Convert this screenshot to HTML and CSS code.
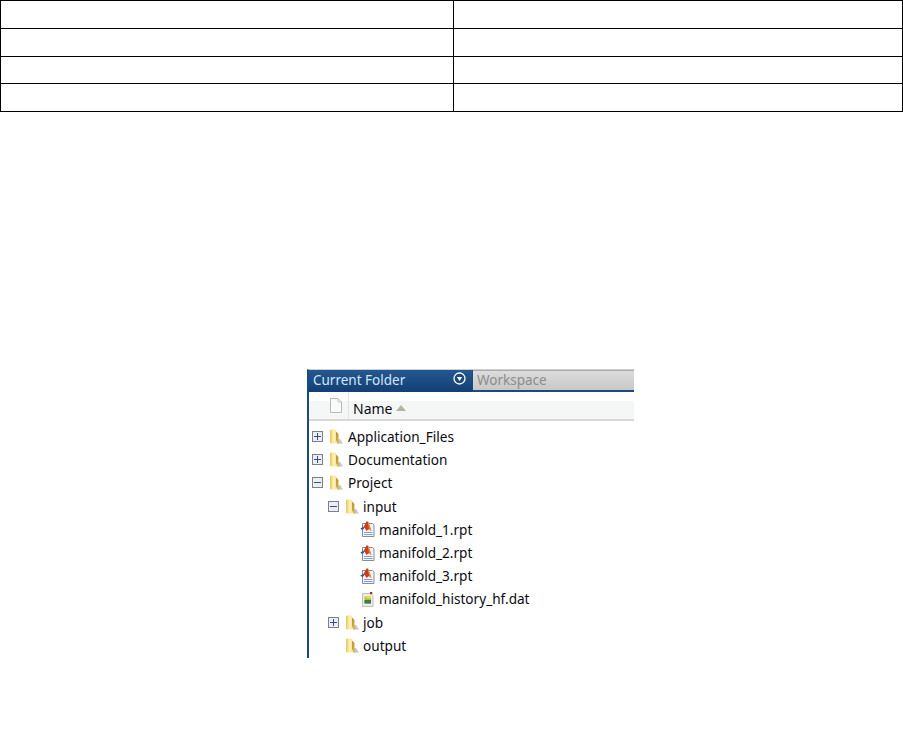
FILE: index.html
```html
<!DOCTYPE html>
<html lang="en">
<head>
<meta charset="utf-8">
<title>Current Folder</title>
<link rel="stylesheet" href="styles.css">
</head>
<body>
<svg class="defs" width="0" height="0" aria-hidden="true">
  <defs>
    <linearGradient id="fg" x1="0" y1="0" x2="1" y2="0">
      <stop offset="0" stop-color="#e8c455"/>
      <stop offset=".45" stop-color="#fdf2b8"/>
      <stop offset="1" stop-color="#f4dc88"/>
    </linearGradient>
    <linearGradient id="fs" x1="0" y1="0" x2="1" y2="1">
      <stop offset="0" stop-color="#b98c20"/>
      <stop offset="1" stop-color="#e0c470"/>
    </linearGradient>
    <symbol id="folder" viewBox="0 0 14 15">
      <path d="M7.500 10h3.500l3 4.500H8z" fill="#c6c6c2"/>
      <path d="M1 1.500 2 .5h4.500l.5 1v10l2 3H2L1 13.500z" fill="url(#fg)"/>
      <path d="M7 2.500l2.500 2.500v6.500l1.500 3H9l-2-3z" fill="url(#fs)"/>
    </symbol>
    <symbol id="plus" viewBox="0 0 11 11">
      <rect x=".5" y=".5" width="10" height="10" fill="#eeeef2" stroke="#7d8088"/>
      <path d="M2 5.500h7M5.500 2v7" stroke="#2f4f86"/>
    </symbol>
    <symbol id="minus" viewBox="0 0 11 11">
      <rect x=".5" y=".5" width="10" height="10" fill="#eeeef2" stroke="#7d8088"/>
      <path d="M2 5.500h7" stroke="#2f4f86"/>
    </symbol>
    <symbol id="rpt" viewBox="0 0 15 16">
      <path d="M2.500 2.500h10l1.500 1.500v11.500H2.500z" fill="#f2f3fa" stroke="#7f8fa8"/>
      <path d="M4 11.500h8.500M4 13.500h8.500" stroke="#8aa0c4"/>
      <path d="M.5 7.500 3.500 6 6.500 .5 8 .5 11.500 10 9 8 6.500 10 4.500 6.500 2.500 9z" fill="#d03c18"/>
      <path d="M.5 7.500 3.500 6 4.500 6.500 2.500 9z" fill="#2458a8"/>
      <path d="M8 .5 11.500 10 9.500 8.500 8 3z" fill="#f09030"/>
    </symbol>
    <symbol id="dat" viewBox="0 0 12 16">
      <path d="M.5 2.500h8.500l2 2v11H.5z" fill="#ececea" stroke="#c0c0bc"/>
      <rect x="2.500" y="5.500" width="6.500" height="7" fill="#a8c83c"/>
      <rect x="2.500" y="9" width="6.500" height="3.500" fill="#3c7c48"/>
      <rect x="4" y="5" width="5" height="2.500" fill="#ecd850"/>
      <rect x="8" y="1" width="2.200" height="2.200" fill="#a82038"/>
    </symbol>
  </defs>
</svg>

<table class="grid">
  <tr><td></td><td></td></tr>
  <tr><td></td><td></td></tr>
  <tr class="short"><td></td><td></td></tr>
  <tr><td></td><td></td></tr>
</table>

<section class="panel">
  <div class="tabs">
    <div class="tab-active">
      <span>Current Folder</span>
      <svg class="tab-menu" viewBox="0 0 13 13" width="13" height="13"><circle cx="6.500" cy="6.500" r="5.500" fill="#1c4a80" stroke="#fff" stroke-width="1.300"/><path d="M3.800 5h5.400L6.500 9z" fill="#fff"/></svg>
    </div>
    <div class="tab-idle">Workspace</div>
  </div>
  <div class="columns">
    <div class="col-icon">
      <svg viewBox="0 0 12 15" width="12" height="15"><path d="M.5.500h7.500l3.500 3.500v10.500H.5z" fill="#fafafa" stroke="#b8b8b8"/><path d="M8 .5v3.500h3.500" fill="none" stroke="#c8c8c8"/></svg>
    </div>
    <div class="col-name">Name<svg class="sort" viewBox="0 0 10 6" width="10" height="6"><path d="M0 6 5 0l5 6z" fill="#b4b4a4"/></svg></div>
  </div>
  <ul class="tree">
    <li class="row"><svg class="toggle"><use href="#plus"/></svg><svg class="folder"><use href="#folder"/></svg><span>Application_Files</span></li>
    <li class="row"><svg class="toggle"><use href="#plus"/></svg><svg class="folder"><use href="#folder"/></svg><span>Documentation</span></li>
    <li class="row"><svg class="toggle"><use href="#minus"/></svg><svg class="folder"><use href="#folder"/></svg><span>Project</span></li>
    <li class="row lvl1"><svg class="toggle"><use href="#minus"/></svg><svg class="folder"><use href="#folder"/></svg><span>input</span></li>
    <li class="row lvl2"><svg class="file"><use href="#rpt"/></svg><span>manifold_1.rpt</span></li>
    <li class="row lvl2"><svg class="file"><use href="#rpt"/></svg><span>manifold_2.rpt</span></li>
    <li class="row lvl2"><svg class="file"><use href="#rpt"/></svg><span>manifold_3.rpt</span></li>
    <li class="row lvl2"><svg class="file dat"><use href="#dat"/></svg><span>manifold_history_hf.dat</span></li>
    <li class="row lvl1"><svg class="toggle"><use href="#plus"/></svg><svg class="folder"><use href="#folder"/></svg><span>job</span></li>
    <li class="row lvl1 no-toggle"><svg class="folder"><use href="#folder"/></svg><span>output</span></li>
  </ul>
</section>
</body>
</html>
```

FILE: styles.css
```css
* { box-sizing: border-box; }
html, body { margin: 0; padding: 0; background: #fff; }
body { width: 903px; height: 735px; overflow: hidden; font-family: "Noto Sans", "DejaVu Sans", sans-serif; color: #0c0c14; }
.defs { display: block; width: 0; height: 0; }

.grid { width: 903px; border-collapse: separate; border-spacing: 0; table-layout: fixed; border-top: 1px solid #000; border-left: 1px solid #000; }
.grid td { height: 28px; padding: 0; border-right: 1px solid #000; border-bottom: 1px solid #000; }
.grid td:first-child { width: 453px; }
.grid .short td { height: 27px; }

.panel { width: 327px; height: 289px; margin: 257px 0 0 307px; border-left: 2px solid #1c4a80; border-top: 1px solid #cfcfcf; overflow: hidden; }

.tabs { display: flex; height: 22px; background: #1c4a80; }
.tab-active { width: 163px; display: flex; align-items: center; justify-content: space-between; padding: 0 6px 3px 4px; font-size: 13.500px; color: #d4e6f6; background: linear-gradient(#235891, #123f74); }
.tab-menu { margin-top: -2px; }
.tab-idle { flex: 1; margin: 0 0 2px 1px; padding: 0 0 1px 4px; display: flex; align-items: center; font-size: 13.500px; color: #8c8c8c; background: linear-gradient(#dcdcdc, #c8c8c8); border-top: 1px solid #aaa; }

.columns { display: flex; height: 29px; background: linear-gradient(#fff 0 33%, #f5f6f6 33% 100%); border-bottom: 2px solid #d8d8d8; }
.col-icon { width: 40px; display: flex; justify-content: flex-end; align-items: center; padding-right: 6px; border-right: 1px solid #e4e4e4; }
.col-name { display: flex; align-items: center; gap: 4px; padding: 5px 0 0 4px; font-size: 14px; }

.tree { list-style: none; margin: 0; padding: 4px 0 0; }
.row { display: flex; align-items: center; height: 23.200px; font-size: 13.600px; padding-left: 3px; }
.row span { margin-left: 5px; }
.row.lvl1 span { margin-left: 4px; }
.lvl1 { padding-left: 19px; }
.lvl2 { padding-left: 51px; }
.lvl2 span { margin-left: 4px; }
.no-toggle { padding-left: 36px; }
.toggle { width: 11px; height: 11px; margin-right: 6px; }
.folder { width: 14px; height: 15px; }
.file { width: 15px; height: 16px; }
.file.dat { width: 12px; margin: 0 1px 0 2px; }
```
